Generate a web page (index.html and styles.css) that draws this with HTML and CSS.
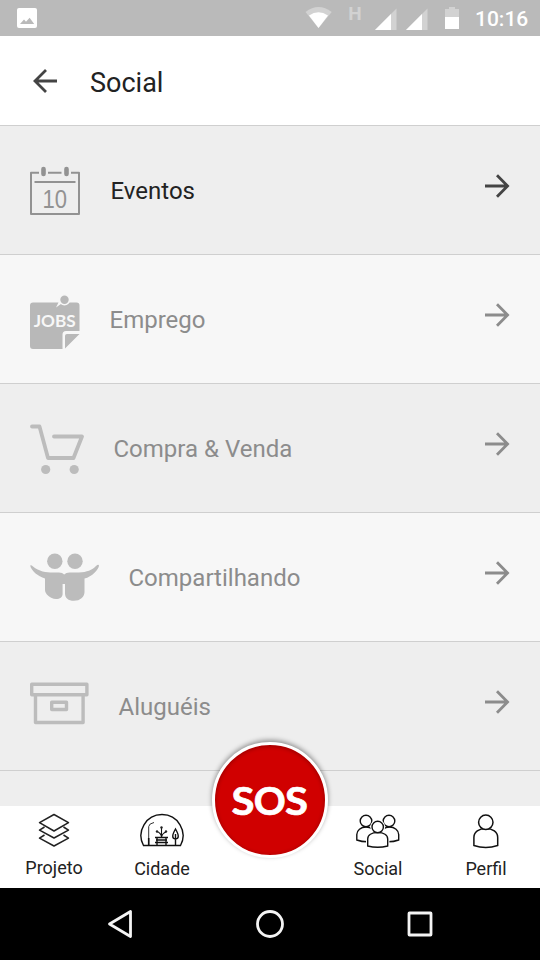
FILE: index.html
```html
<!DOCTYPE html>
<html lang="pt">
<head>
<meta charset="utf-8">
<title>Social</title>
<link rel="stylesheet" href="styles.css">
</head>
<body>
<div class="screen">
  <div class="status">
    <svg class="status-photo" width="20" height="20" viewBox="17 8 20 20"><rect x="17" y="8" width="20" height="20" rx="2" fill="#fff"/><path d="M20 24l4-4.500 2 2.200 3.600-4 4.600 6.300z" fill="#bababa"/></svg>
    <svg class="status-icons" width="126" height="36" viewBox="300 0 126 36">
      <path d="M305.500 12Q318.500 2 331.700 12L318.500 28z" fill="#d2d2d2"/>
      <path d="M309 15.500Q318.500 9 328 15.500L318.500 28z" fill="#fff"/>
      <text class="signal-type" x="348.200" y="19.500">H</text>
      <path d="M375 30L396.500 8.500V30z" fill="#d2d2d2"/><path d="M375 30L391 14V30z" fill="#fff"/>
      <path d="M406 30L427.500 8.500V30z" fill="#d2d2d2"/><path d="M406 30L422 14V30z" fill="#fff"/>
    </svg>
    <svg class="battery" width="16" height="24" viewBox="444 6 16 24"><path d="M445 9h4V7h6v2h4v8h-14z" fill="#d2d2d2"/><path d="M445 17h14v12h-14z" fill="#fff"/></svg>
    <span class="clock">10:16</span>
  </div>
  <header class="header">
    <svg width="26" height="26" viewBox="32 68 26 26" fill="none" stroke="#444" stroke-width="2.800"><path d="M57 81H35M46 70L35 81l11 11"/></svg>
    <h1>Social</h1>
  </header>
  <main class="list">
    <div class="row active">
      <svg width="51" height="60" viewBox="30 160 51 60" fill="none" stroke="#929292" stroke-width="2" stroke-linejoin="round"><path d="M39 172.700h-8V214h48v-41.300h-8M48 172.700h13.500M34.500 182h41"/><path d="M43.500 169v5M66.500 169v5" stroke-width="4.600" stroke-linecap="round"/><text class="day" x="54.700" y="207.700" textLength="24.500" lengthAdjust="spacingAndGlyphs">10</text></svg>
      <span class="label">Eventos</span>
      <svg class="arrow" width="26" height="26" viewBox="0 0 26 26"><path d="M1 13h22M13 2.200L23.600 13 13 23.800"/></svg>
    </div>
    <div class="row">
      <svg width="50" height="60" viewBox="30 289 50 60"><path d="M33 302.500h25.500l-2.500 5 6-4.300q2.500 1.300 5.500-.7h9q3 0 3 3V331H66q-3.500 0-3.500 3.500V349H33q-3 0-3-3v-40.500q0-3 3-3z" fill="#b8b8b8"/><path d="M65 348.500V336q0-2 2-2h12.500z" fill="#b8b8b8"/><circle cx="64.500" cy="299.700" r="5" fill="#b8b8b8" stroke="#f7f7f7" stroke-width="1.600"/><text class="jobs" x="54.700" y="327.300" textLength="42" lengthAdjust="spacingAndGlyphs">JOBS</text></svg>
      <span class="label">Emprego</span>
      <svg class="arrow" width="26" height="26" viewBox="0 0 26 26"><path d="M1 13h22M13 2.200L23.600 13 13 23.800"/></svg>
    </div>
    <div class="row">
      <svg width="54" height="60" viewBox="30 418 54 60" fill="none" stroke="#bcbcbc" stroke-width="3.800" stroke-linecap="round" stroke-linejoin="round"><path d="M32 426.500h7.500l8.500 31.500h25.500L82 436.500H54"/><g fill="#bcbcbc" stroke="none"><circle cx="45.700" cy="469.500" r="4.600"/><circle cx="74.200" cy="469.500" r="4.600"/></g></svg>
      <span class="label">Compra &amp; Venda</span>
      <svg class="arrow" width="26" height="26" viewBox="0 0 26 26"><path d="M1 13h22M13 2.200L23.600 13 13 23.800"/></svg>
    </div>
    <div class="row">
      <svg width="69" height="60" viewBox="30 547 69 60" fill="#bcbcbc"><circle cx="54.800" cy="561.300" r="7.700"/><circle cx="75" cy="561.300" r="7.700"/><path d="M30.200 565.500Q31 564.500 33 566.500C39 571.500 46 572.500 53 572.500H59Q62.500 572.500 64.200 574.500Q66 572.500 69.500 572.500H79C87 572.200 92 570 96 566Q98.500 564 99 565.500C99 569 92 577 84.500 578.500V592C84.500 597 80 600.800 74 600.800C68 600.800 65 598 65 593.500V584H62.600V594C62.600 597 60 599 56 599C50 598.500 45 594 45 590V578.500C38 576.500 31 570.500 30.200 565.500z"/></svg>
      <span class="label">Compartilhando</span>
      <svg class="arrow" width="26" height="26" viewBox="0 0 26 26"><path d="M1 13h22M13 2.200L23.600 13 13 23.800"/></svg>
    </div>
    <div class="row">
      <svg width="59" height="60" viewBox="30 676 59 60" fill="none" stroke="#bcbcbc" stroke-width="3.400" stroke-linejoin="round"><path d="M31.700 684.300h55.200v10.500H31.700zM35.500 695v27.500h47.600V695M51.700 702.300h14.800v7.200H51.700z"/></svg>
      <span class="label">Aluguéis</span>
      <svg class="arrow" width="26" height="26" viewBox="0 0 26 26"><path d="M1 13h22M13 2.200L23.600 13 13 23.800"/></svg>
    </div>
  </main>
  <nav class="tabs">
    <div class="tab first">
      <svg width="32" height="34" viewBox="38 813 32 34" fill="none" stroke="#222" stroke-width="1.500" stroke-linejoin="round"><path d="M54 814.500l14.500 8.200L54 831l-14.500-8.300zM44.500 827l-5 3.200L54 838l14.500-7.800-5-3.200M44.500 835l-5 3.200L54 846l14.500-7.800-5-3.200"/></svg>
      <span>Projeto</span>
    </div>
    <div class="tab">
      <svg width="46" height="34" viewBox="139 814 46 34" fill="none" stroke="#111" stroke-width="1.400"><path d="M143.500 846.500A21 21 0 1 1 180.500 846.500z"/><path d="M148.700 846v-18.500q.3-3 5.300-4" stroke="#333" stroke-width="1"/><path d="M148.700 846v-7" stroke-width="1.600"/><path d="M155 838.500h13M156 841h11M155 843.500h13M157 839v7M166 839v7"/><path d="M161.500 838v-9.500M161.500 838q-.5-4-4.500-5.500M161.500 838q1-4 4.500-5" stroke-width="1.100"/><g fill="#222" stroke="none"><circle cx="161.500" cy="828.500" r="1.200"/><circle cx="157" cy="832.500" r="1.200"/><circle cx="166" cy="832.500" r="1.200"/></g><path d="M175.500 846v-11M175.500 830q-5.500 9.500 0 10 5.500-.5 0-10z"/></svg>
      <span>Cidade</span>
    </div>
    <div class="sos"><svg width="90" height="70" viewBox="0 0 90 70"><text x="6.500" y="50" textLength="23" lengthAdjust="spacingAndGlyphs">S</text><text x="28.700" y="50" textLength="32" lengthAdjust="spacingAndGlyphs">O</text><text x="60" y="50" textLength="23" lengthAdjust="spacingAndGlyphs">S</text></svg></div>
    <div class="tab">
      <svg width="46" height="36" viewBox="355 813 46 36" fill="#fff" stroke="#111" stroke-width="1.400"><path d="M356.800 840v-5.500c0-4 4-7.500 9.200-7.500s9 3.500 9 7.500V841q-10 2-18.200-1z"/><circle cx="366" cy="821" r="5.800"/><path d="M398.700 840v-5.500c0-4-4-7.500-9.200-7.500s-9 3.500-9 7.500V841q10 2 18.200-1z"/><circle cx="389" cy="821" r="5.800"/><path d="M368 846v-7c0-4 4-7 9.700-7s9.700 3 9.700 7v7q-9.700 3-19.400 0z" stroke="#fff" stroke-width="4"/><circle cx="377.700" cy="827" r="5.700" stroke="#fff" stroke-width="3.600"/><path d="M367.700 846v-7c0-4 4-6.500 10-6.500s10 2.500 10 6.500v7q-10 2.500-20 0z"/><circle cx="377.700" cy="827" r="5.700"/></svg>
      <span>Social</span>
    </div>
    <div class="tab">
      <svg width="28" height="36" viewBox="471.500 813 28 36" fill="#fff" stroke="#111" stroke-width="1.500"><path d="M473.400 845.500v-8c0-5.500 5-9 11.900-9s11.900 3.500 11.900 9v8q-11.900 3.800-23.800 0z"/><circle cx="485.300" cy="822.300" r="7.200"/></svg>
      <span>Perfil</span>
    </div>
  </nav>
  <div class="system">
    <svg width="30" height="32" viewBox="105 908 30 32"><path d="M109.500 924l21-12.500v25z"/></svg>
    <svg width="30" height="32" viewBox="255 908 30 32"><circle cx="270" cy="924" r="12.500"/></svg>
    <svg width="30" height="32" viewBox="405 908 30 32"><rect x="409" y="913" width="22" height="22" rx=".5"/></svg>
  </div>
</div>
</body>
</html>
```
FILE: styles.css
```css
* { box-sizing: border-box; }
body { margin: 0; font-family: Roboto, "Liberation Sans", sans-serif; color: #222; }
svg { display: block; flex: none; }
.screen { width: 540px; height: 960px; display: flex; flex-direction: column; overflow: hidden; background: #eee; }

.status { height: 36px; background: #bababa; display: flex; align-items: center; padding: 0 12px 0 17px; }
.status-icons { margin-left: auto; overflow: visible; }
.signal-type { font-size: 19px; font-weight: 700; fill: #d2d2d2; }
.battery { margin-left: 18px; }
.clock { width: 53px; margin: 2px 0 0 15px; color: #fff; font-size: 21px; font-weight: 500; white-space: nowrap; }

.header { height: 90px; background: #fff; border-bottom: 1px solid #cfcfcf; display: flex; align-items: center; gap: 32px; padding: 0 32px; }
.header h1 { margin: 5px 0 0; font-size: 27px; font-weight: 400; line-height: 32px; }

.list { height: 680px; background: #eee; }
.row { height: 129px; border-bottom: 1px solid #cfcfcf; display: flex; align-items: center; padding: 0 30px; }
.row:nth-child(even) { background: #f7f7f7; }
.label { margin: 2px 0 0 29.5px; font-size: 24px; line-height: 30px; color: #8c8c8c; }
.active .label { color: #222; }
.arrow { margin: 0 0 8px auto; fill: none; stroke: #8c8c8c; stroke-width: 2.8; }
.active .arrow { stroke: #444; }
.day { font: 25px "Liberation Sans", sans-serif; fill: #929292; stroke: none; text-anchor: middle; }
.jobs { font: 700 17px Lato, sans-serif; fill: #f7f7f7; text-anchor: middle; }

.tabs { height: 82px; background: #fff; display: grid; grid-template-columns: repeat(5, 108px); }
.tab { display: flex; flex-direction: column; align-items: center; justify-content: space-between; padding: 7px 0 9px; font-size: 18px; line-height: 21px; }
.first { padding-bottom: 10px; }
.sos { position: relative; justify-self: center; width: 116px; height: 116px; margin-top: -64px; border: 3px solid #fff; border-radius: 50%; background: #d00000; display: flex; align-items: center; justify-content: center; box-shadow: 0 -2px 5px rgba(0,0,0,.4), inset 0 1px 4px rgba(0,0,0,.3); }
.sos text { font: 700 39px Lato, sans-serif; fill: #fff; stroke: #fff; stroke-width: .7; stroke-linejoin: round; }

.system { height: 72px; background: #000; display: flex; align-items: center; justify-content: center; gap: 120px; }
.system svg { fill: none; stroke: #f4f4f4; stroke-width: 2.8; stroke-linejoin: round; }
```
